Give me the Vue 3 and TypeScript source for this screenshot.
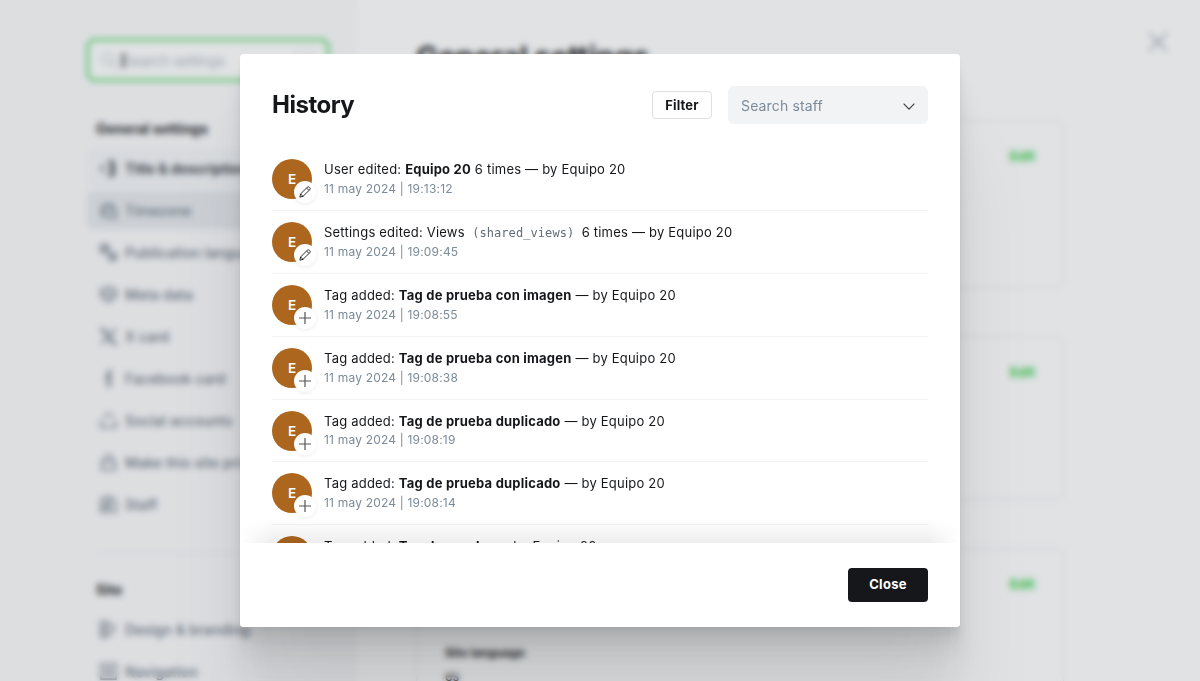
<script setup lang="ts">
type Action = 'edit' | 'add'

interface Entry {
  action: Action
  label: string
  name?: string
  code?: string
  times?: string
  date: string
}

interface NavItem {
  label: string
  icon: string
  state?: string
}

const entries: Entry[] = [
  { action: 'edit', label: 'User edited: ', name: 'Equipo 20', times: '6 times ', date: '11 may 2024 | 19:13:12' },
  { action: 'edit', label: 'Settings edited: Views ', code: '(shared_views)', times: '6 times ', date: '11 may 2024 | 19:09:45' },
  { action: 'add', label: 'Tag added: ', name: 'Tag de prueba con imagen', date: '11 may 2024 | 19:08:55' },
  { action: 'add', label: 'Tag added: ', name: 'Tag de prueba con imagen', date: '11 may 2024 | 19:08:38' },
  { action: 'add', label: 'Tag added: ', name: 'Tag de prueba duplicado', date: '11 may 2024 | 19:08:19' },
  { action: 'add', label: 'Tag added: ', name: 'Tag de prueba duplicado', date: '11 may 2024 | 19:08:14' },
  { action: 'add', label: 'Tag added: ', name: 'Tag de prueba', date: '11 may 2024 | 19:08:02' },
]

const general: NavItem[] = [
  { label: 'Title & description', icon: 'M6 6 2 10l4 4M9 2h4a3 3 0 0 1 3 3v10a3 3 0 0 1-3 3H9M11 6h4v8h-4M13 2v16', state: 'current' },
  { label: 'Timezone', icon: 'M8 18a7.5 7.5 0 1 1 9-10M5 3v12M8 6h6M11 10h7v8h-7z', state: 'hovered' },
  { label: 'Publication language', icon: 'M2 2h8v8H2zM4 4l4 4M8 4 4 8M11 11h7v7h-7zM12 17l5-5M10 10l2 2' },
  { label: 'Meta data', icon: 'M2 5l8-3 8 3v7l-8 6-8-6zM5 9a5 4 0 0 0 10 0M5 7h10' },
  { label: 'X card', icon: 'M2 2h4l12 16h-4zM18 2 2 18' },
  { label: 'Facebook card', icon: 'M14 2h-2a3 3 0 0 0-3 3v14M6 9h7M12 4v15' },
  { label: 'Social accounts', icon: 'M6 7a4 4 0 0 1 8 0M4 9l-2 3v5h16v-5l-2-3' },
  { label: 'Make this site private', icon: 'M3 9h14v9H3zM6 9V6a4 4 0 0 1 8 0v3' },
  { label: 'Staff', icon: 'M2 18V5l4-3h7l5 5v11h-5M2 13h9v5H2zM7 6h5v5H7z' },
]

const site: NavItem[] = [
  { label: 'Design & branding', icon: 'M2 2h6v16H2zM8 3l9 4-4 7-5 2M5 6v8' },
  { label: 'Navigation', icon: 'M2 2h16v16H2zM7 7h6v6H7z' },
]
</script>

<template>
  <div class="screen">
    <div class="page">
      <aside class="sidebar">
        <div class="search">
          <svg class="search-icon" viewBox="0 0 16 16"><circle cx="6.5" cy="6.5" r="5.5" /><path d="m10.5 10.5 5 5" /></svg>
          <i class="caret"></i>
          <span>Search settings</span>
          <kbd>/</kbd>
        </div>
        <nav>
          <h4>General settings</h4>
          <ul>
            <li v-for="item in general" :key="item.label" :class="item.state">
              <svg viewBox="0 0 20 20"><path :d="item.icon" /></svg>
              <span>{{ item.label }}</span>
            </li>
          </ul>
        </nav>
        <nav class="second">
          <h4>Site</h4>
          <ul>
            <li v-for="item in site" :key="item.label">
              <svg viewBox="0 0 20 20"><path :d="item.icon" /></svg>
              <span>{{ item.label }}</span>
            </li>
          </ul>
        </nav>
      </aside>
      <main class="content">
        <div class="column">
          <h2>General settings</h2>
          <section class="card first"><b class="edit">Edit</b></section>
          <section class="card middle"><b class="edit">Edit</b></section>
          <section class="card last">
            <b class="edit">Edit</b>
            <div class="field">
              <b>Site language</b>
              <span>es</span>
            </div>
          </section>
        </div>
        <svg class="dismiss" viewBox="0 0 20 20"><path d="M1 1l18 18M19 1 1 19" /></svg>
      </main>
    </div>

    <div class="backdrop">
      <div class="modal" role="dialog">
        <header>
          <h1>History</h1>
          <button class="filter">Filter</button>
          <div class="select">
            <span>Search staff</span>
            <svg viewBox="0 0 12 7"><path d="M.6.7 6 6.1 11.4.7" /></svg>
          </div>
        </header>
        <div class="list">
          <div v-for="(entry, i) in entries" :key="i" class="row">
            <div class="avatar">
              <span>E</span>
              <div class="badge">
                <svg v-if="entry.action === 'edit'" viewBox="0 0 14 14">
                  <path d="M1 13l.9-3.7 7.7-7.8a1.7 1.7 0 0 1 2.5 0l.4.4a1.7 1.7 0 0 1 0 2.5l-7.8 7.7zM1.9 9.3l2.8 2.8M8.8 2.3l2.9 2.9" />
                </svg>
                <svg v-else class="plus" viewBox="0 0 14 14"><path d="M7 1v12M1 7h12" /></svg>
              </div>
            </div>
            <div class="info">
              <p>{{ entry.label }}<b v-if="entry.name">{{ entry.name }}</b><code v-if="entry.code">{{ entry.code }}</code>{{ ' ' }}{{ entry.times }}— by Equipo 20</p>
              <small>{{ entry.date }}</small>
            </div>
          </div>
        </div>
        <footer><button class="close">Close</button></footer>
      </div>
    </div>
  </div>
</template>

<style>
body {
  margin: 0;
  overflow: hidden;
}
</style>

<style scoped>
.screen {
  position: relative;
  width: 1200px;
  height: 681px;
  overflow: hidden;
  background: #fff;
  color: #15171a;
  font-family: Inter, "Liberation Sans", sans-serif;
  font-size: 13px;
}
.screen * {
  box-sizing: border-box;
}
h1, h2, h4, p, ul {
  margin: 0;
  padding: 0;
}
svg {
  fill: none;
  stroke: currentColor;
  flex: none;
}
.page {
  display: flex;
  height: 681px;
  overflow: hidden;
}
.sidebar {
  width: 357px;
  flex: none;
  padding: 39px 28px 0 87px;
  background: #fafafb;
}
.search {
  display: flex;
  align-items: center;
  height: 42px;
  padding: 0 12px;
  border: 2px solid #30cf43;
  border-radius: 8px;
  background: #fff;
  box-shadow: 0 0 0 1px rgba(48, 207, 67, .2);
  color: #aab4be;
  font-size: 14px;
  letter-spacing: -.15px;
}
.search-icon {
  width: 16px;
  height: 16px;
  stroke-width: 1.2;
}
.caret {
  width: 2px;
  height: 15px;
  margin-left: 5px;
  background: #15171a;
}
.search kbd {
  width: 20px;
  height: 20px;
  margin-left: auto;
  border: 1px solid #dde1e5;
  border-radius: 4px;
  font: 11px/18px Inter, sans-serif;
  text-align: center;
}
nav {
  padding-top: 39px;
}
nav h4 {
  padding-left: 9px;
  font-size: 14px;
  line-height: 18px;
  font-weight: 700;
}
ul {
  list-style: none;
  padding-top: 11px;
}
li {
  display: flex;
  align-items: center;
  gap: 7px;
  height: 38px;
  margin-bottom: 4px;
  padding-left: 12px;
  border-radius: 6px;
  color: #626d79;
  font-size: 14px;
  font-weight: 500;
  letter-spacing: .1px;
  white-space: nowrap;
}
li svg {
  width: 19px;
  height: 19px;
  stroke-width: 1.6;
}
.current {
  background: #f5f6f8;
  color: #394047;
  font-weight: 700;
  letter-spacing: -.1px;
}
.hovered {
  background: #e6e9ed;
}
.second {
  margin: 30px 0 0 9px;
  padding-top: 27px;
  border-top: 1px solid #e6e9ed;
}
.second h4 {
  padding-left: 0;
}
.second ul {
  margin-left: -9px;
}
.content {
  display: flex;
  flex: 1;
  justify-content: space-between;
  padding: 0 32px 0 59px;
}
.column {
  width: 648px;
  padding-top: 38px;
}
.column h2 {
  font-size: 30px;
  line-height: 38px;
  font-weight: 700;
  letter-spacing: -.4px;
}
.card {
  display: flex;
  flex-direction: column;
  padding: 26px 28px 0;
  border: 1px solid #e6e9ed;
  border-radius: 8px;
  height: 168px;
}
.first {
  margin-top: 44px;
}
.middle {
  margin-top: 48px;
  height: 164px;
}
.last {
  margin-top: 48px;
  height: 240px;
}
.edit {
  align-self: flex-end;
  color: #30cf43;
  font-size: 13.5px;
  line-height: 19px;
}
.field {
  display: flex;
  flex-direction: column;
  gap: 5px;
  margin-top: 49px;
  line-height: 19px;
}
.field b {
  font-size: 12px;
}
.dismiss {
  width: 20px;
  height: 20px;
  margin-top: 32px;
  color: #7c8b9a;
  stroke-width: 1.4;
}
.backdrop {
  position: absolute;
  inset: 0;
  background: rgba(98, 109, 121, .2);
  backdrop-filter: blur(3px);
}
.modal {
  display: flex;
  flex-direction: column;
  width: 720px;
  height: 573px;
  margin: 54px auto 0;
  border-radius: 4px;
  background: #fff;
  box-shadow: 0 3.2px 2.4px rgba(0, 0, 0, .02), 0 7px 5.3px rgba(0, 0, 0, .035), 0 13px 10px rgba(0, 0, 0, .042), 0 23px 18px rgba(0, 0, 0, .05), 0 42px 33.4px rgba(0, 0, 0, .06), 0 100px 80px rgba(0, 0, 0, .08);
}
header {
  display: flex;
  align-items: center;
  flex: none;
  height: 70px;
  padding: 32px 32px 0;
}
h1 {
  flex: 1;
  font-size: 24px;
  line-height: 30px;
  font-weight: 700;
  letter-spacing: -.5px;
}
button {
  padding: 0;
  font-family: inherit;
  font-weight: 700;
  font-size: 13px;
}
.filter {
  width: 60px;
  height: 28px;
  border: 1px solid #dde1e5;
  border-radius: 4px;
  background: #fff;
  color: #15171a;
  letter-spacing: .15px;
}
.select {
  display: flex;
  align-items: center;
  justify-content: space-between;
  width: 200px;
  height: 38px;
  margin-left: 16px;
  padding: 1px 13px 0;
  border-radius: 6px;
  background: #f1f3f4;
  color: #7c8b9a;
  font-size: 14px;
  letter-spacing: .15px;
}
.select svg {
  width: 12px;
  height: 7px;
  margin-top: 2px;
  color: #394047;
  stroke-width: 1.2;
}
.list {
  height: 419px;
  flex: none;
  padding: 24.4px 32px 0;
  overflow: hidden;
}
.row {
  display: flex;
  gap: 12px;
  height: 62.8px;
  padding-top: 11px;
  border-bottom: 1px solid #f1f3f4;
}
.avatar {
  position: relative;
  width: 40px;
  height: 40px;
  flex: none;
  border-radius: 50%;
  background: #ad661e;
  color: #fff;
  font-size: 13.5px;
  font-weight: 600;
  line-height: 41px;
  text-align: center;
}
.badge {
  position: absolute;
  right: -4px;
  bottom: -4px;
  display: flex;
  align-items: center;
  justify-content: center;
  width: 22px;
  height: 22px;
  border-radius: 50%;
  background: #fff;
  box-shadow: 0 1px 4px rgba(0, 0, 0, .08);
  color: #15171a;
}
.badge svg {
  width: 12px;
  height: 12px;
  stroke-width: 1.05;
}
.badge .plus {
  width: 14px;
  height: 14px;
  color: #555;
  stroke-width: 1.2;
}
.info {
  display: flex;
  flex-direction: column;
  white-space: nowrap;
}
.info p {
  height: 20.8px;
  line-height: 20px;
  letter-spacing: .21px;
}
.info b {
  font-weight: 700;
}
code {
  margin: 0 3.5px;
  color: #626d79;
  font: 12px/16px "DejaVu Sans Mono", monospace;
  letter-spacing: .07px;
}
small {
  color: #7c8b9a;
  font-size: 12px;
  line-height: 18px;
  letter-spacing: .19px;
}
footer {
  position: relative;
  display: flex;
  justify-content: flex-end;
  height: 84px;
  padding: 25px 32px 0;
  border-radius: 0 0 4px 4px;
  background: #fff;
}
footer::before {
  content: "";
  position: absolute;
  inset: -24px 0 auto;
  height: 24px;
  background: linear-gradient(to top, rgba(0, 0, 0, .065), transparent);
  mask-image: linear-gradient(to right, transparent, #000 32px, #000 calc(100% - 32px), transparent);
}
.close {
  width: 80px;
  height: 34px;
  padding-bottom: 2px;
  border: 0;
  border-radius: 4px;
  background: #15171a;
  color: #fff;
  letter-spacing: .3px;
}
</style>
